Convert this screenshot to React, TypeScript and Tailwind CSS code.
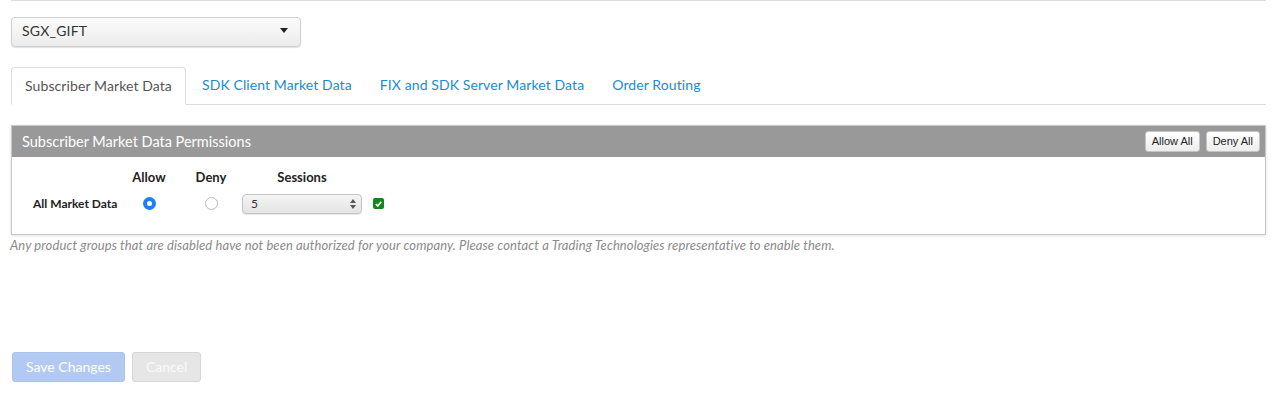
import { useState } from 'react';

const tabs = [
  'Subscriber Market Data',
  'SDK Client Market Data',
  'FIX and SDK Server Market Data',
  'Order Routing',
];

const Caret = () => (
  <svg width="8" height="5" viewBox="0 0 8 5" className="shrink-0">
    <path d="M0 0h8L4 5z" fill="#222" />
  </svg>
);

const Stepper = () => (
  <svg width="6" height="10" viewBox="0 0 6 10" className="shrink-0">
    <path d="M3 0l3 4H0z" fill="#555" />
    <path d="M0 6h6l-3 4z" fill="#555" />
  </svg>
);

export default function App() {
  const [tab, setTab] = useState(0);
  const [allow, setAllow] = useState(true);

  return (
    <div className="h-[410px] w-[1278px] bg-white font-['Lato','Open_Sans',sans-serif] text-[#333]">
      <div className="ml-[11px] mr-[12px] border-t border-[#dddddd] pt-[16px]">
        <button className="flex h-[30px] w-[290px] items-center justify-between rounded-[4px] border border-[#cfcfcf] bg-gradient-to-b from-[#fbfbfb] to-[#ececec] pb-[3px] pl-[10px] pr-[12px] text-[14px] tracking-[0.2px] text-[#333] shadow-[0_1px_1px_rgba(0,0,0,0.12)]">
          <span>SGX_GIFT</span>
          <Caret />
        </button>

        <div className="mt-[20px] flex h-[38px] items-end border-b border-[#dddddd]">
          {tabs.map((t, i) => (
            <button
              key={t}
              onClick={() => setTab(i)}
              className={
                i === tab
                  ? '-mb-px mr-[2px] flex h-[38px] items-center rounded-t-[4px] border border-b-white border-[#dddddd] bg-white px-[13px] pb-[1px] text-[14px] tracking-[0.1px] text-[#555]'
                  : 'flex h-[38px] items-center px-[14px] pb-[1px] text-[14px] tracking-[0.1px] text-[#1a8bd1]'
              }
            >
              {t}
            </button>
          ))}
        </div>

        <div className="mt-[20px] border border-[#c8c8c8] shadow-[0_1px_3px_rgba(0,0,0,0.12)]">
          <div className="flex h-[31px] items-center justify-between bg-[#999999] pl-[10px] pr-[5px]">
            <span className="text-[14.5px] text-white">Subscriber Market Data Permissions</span>
            <div className="flex gap-[6px]">
              <button className="h-[21px] rounded-[3px] border border-[#c4c4c4] bg-gradient-to-b from-white to-[#ededed] px-[6px] font-['Liberation_Sans',sans-serif] text-[11px] text-[#222]">
                Allow All
              </button>
              <button className="h-[21px] rounded-[3px] border border-[#c4c4c4] bg-gradient-to-b from-white to-[#ededed] px-[6px] font-['Liberation_Sans',sans-serif] text-[11px] text-[#222]">
                Deny All
              </button>
            </div>
          </div>

          <div className="h-[77px] pt-[11px]">
            <div className="grid grid-cols-[106px_62px_62px_124px_30px] items-center">
              <span />
              <span className="text-center text-[13px] font-bold text-[#222]">Allow</span>
              <span className="text-center text-[13px] font-bold text-[#222]">Deny</span>
              <span className="pr-[4px] text-center text-[13px] font-bold text-[#222]">Sessions</span>
              <span />
            </div>
            <div className="mt-[6px] grid h-[20px] grid-cols-[106px_62px_62px_124px_30px] items-center">
              <span className="pl-[21px] text-[12px] font-bold text-[#222]">All Market Data</span>
              <span className="flex justify-center">
                <span
                  onClick={() => setAllow(true)}
                  className={
                    allow
                      ? 'flex h-[13px] w-[13px] items-center justify-center rounded-full bg-[#1a82f7]'
                      : 'h-[13px] w-[13px] rounded-full border border-[#bbbbbb] bg-white'
                  }
                >
                  {allow && <span className="h-[5px] w-[5px] rounded-full bg-white" />}
                </span>
              </span>
              <span className="flex justify-center">
                <span
                  onClick={() => setAllow(false)}
                  className={
                    !allow
                      ? 'flex h-[13px] w-[13px] items-center justify-center rounded-full bg-[#1a82f7]'
                      : 'h-[13px] w-[13px] rounded-full border border-[#bbbbbb] bg-white'
                  }
                >
                  {!allow && <span className="h-[5px] w-[5px] rounded-full bg-white" />}
                </span>
              </span>
              <span className="flex h-[20px] w-[120px] items-center justify-between rounded-[4px] border border-[#c4c4c4] bg-gradient-to-b from-[#f4f4f4] to-[#e4e4e4] pl-[8px] pr-[5px] text-[12px] text-[#333] shadow-[0_1px_1px_rgba(0,0,0,0.1)]">
                <span>5</span>
                <Stepper />
              </span>
              <span className="flex pl-[7px]">
                <span className="flex h-[11px] w-[11px] items-center justify-center rounded-[2px] bg-[#15861c]">
                  <svg width="7" height="6" viewBox="0 0 7 6">
                    <path d="M0.8 3l2 2L6.2 0.8" stroke="white" strokeWidth="1.6" fill="none" />
                  </svg>
                </span>
              </span>
            </div>
          </div>
        </div>

        <p className="-ml-[1px] mt-[1px] text-[13px] italic tracking-[0.1px] text-[#8a8a8a]">
          Any product groups that are disabled have not been authorized for your company. Please contact a Trading Technologies representative to enable them.
        </p>

        <div className="mt-[96px] flex gap-[7px] pl-[1px]">
          <button className="h-[30px] rounded-[3px] border border-[#a9c2ee] bg-[#b2c9f1] px-[13px] text-[14px] text-white">
            Save Changes
          </button>
          <button className="h-[30px] rounded-[3px] border border-[#d6d6d6] bg-[#e6e6e6] px-[13px] text-[14px] text-[#fafafa]">
            Cancel
          </button>
        </div>
      </div>
    </div>
  );
}
